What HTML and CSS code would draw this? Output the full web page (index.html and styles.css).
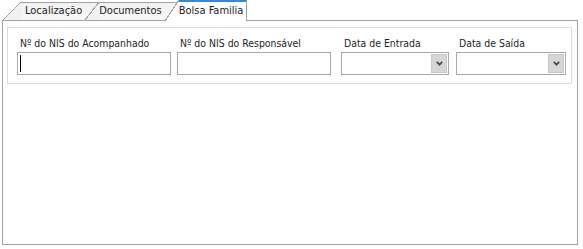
FILE: index.html
```html
<!DOCTYPE html>
<html lang="pt-BR">
<head>
    <meta charset="UTF-8">
    <title>Bolsa Familia</title>
    <link rel="stylesheet" href="styles.css">
</head>
<body>

    <div class="window">
        <div class="tabs">
            <div class="tab tab-first">Localização</div>
            <div class="tab">Documentos</div>
            <div class="tab tab-active">Bolsa Familia</div>
        </div>

        <div class="panel">
            <div class="group">
                <div class="field">
                    <label for="nisAcomp">Nº do NIS do Acompanhado</label>
                    <div class="input-wrap">
                        <input type="text" id="nisAcomp" class="text-input">
                        <span class="caret"></span>
                    </div>
                </div>
                <div class="field">
                    <label for="nisResp">Nº do NIS do Responsável</label>
                    <input type="text" id="nisResp" class="text-input">
                </div>
                <div class="field">
                    <label for="dataEntrada">Data de Entrada</label>
                    <div class="select select-entrada">
                        <select id="dataEntrada"></select>
                        <span class="select-btn">
                            <svg width="7" height="5" viewBox="0 0 7 5"><polyline points="0.8,0.8 3.5,3.6 6.2,0.8" fill="none" stroke="#4a4a4a" stroke-width="1.8"/></svg>
                        </span>
                    </div>
                </div>
                <div class="field">
                    <label for="dataSaida">Data de Saída</label>
                    <div class="select select-saida">
                        <select id="dataSaida"></select>
                        <span class="select-btn">
                            <svg width="7" height="5" viewBox="0 0 7 5"><polyline points="0.8,0.8 3.5,3.6 6.2,0.8" fill="none" stroke="#4a4a4a" stroke-width="1.8"/></svg>
                        </span>
                    </div>
                </div>
            </div>
        </div>
    </div>

</body>
</html>
```

FILE: styles.css
```css
*,
::after,
::before {
    margin: 0;
    padding: 0;
    box-sizing: border-box;
}

body {
    background-color: #fff;
    font-family: "DejaVu Sans Condensed", "DejaVu Sans", sans-serif;
    font-size: 11px;
    color: #1e1e1e;
}

/* tab strip */
.tabs {
    display: flex;
    align-items: flex-start;
    height: 20px;
    position: relative;
    z-index: 1;
}

.tab {
    --s: 14px;
    height: 18px;
    margin-top: 2px;
    margin-left: -14px;
    padding: 0 17px 0 14px;
    line-height: 18px;
    white-space: nowrap;
    color: #222;
    background:
        linear-gradient(#a2a2a2, #a2a2a2) var(--s) 0 / 100% 1px no-repeat,
        linear-gradient(to bottom right, transparent calc(50% - 0.6px), #a2a2a2 calc(50% - 0.6px), #a2a2a2 calc(50% + 0.6px), #f1f1f1 calc(50% + 0.6px)) 0 0 / var(--s) 100% no-repeat,
        linear-gradient(#f1f1f1, #f7f7f7) var(--s) 0 / 100% 100% no-repeat;
}

.tab-first {
    --s: 18px;
    margin-left: 3px;
    padding-left: 22px;
}

.tab-active {
    height: 21px;
    margin-top: 0;
    margin-bottom: -1px;
    padding: 2px 3px 0 14px;
    border-right: 1px solid #a2a2a2;
    background:
        linear-gradient(#3b86d6, #3b86d6) var(--s) 0 / 100% 2px no-repeat,
        linear-gradient(to bottom right, transparent calc(50% - 0.6px), #a2a2a2 calc(50% - 0.6px), #a2a2a2 calc(50% + 0.6px), #fff calc(50% + 0.6px)) 0 0 / var(--s) 100% no-repeat,
        linear-gradient(#fff, #fff) var(--s) 0 / 100% 100% no-repeat;
}

/* tab body */
.panel {
    margin-left: 2px;
    width: 576px;
    height: 225px;
    border: 1px solid #a2a2a2;
    padding: 6px 5px 0 4px;
}

.group {
    display: grid;
    grid-template-columns: 160px 164px 115px 110px;
    height: 57px;
    border: 1px solid #dcdcdc;
    padding: 9px 0 0 9px;
}

.field label {
    display: block;
    padding-left: 3px;
    font-size: 10.4px;
    line-height: 13px;
    margin-bottom: 2px;
    white-space: nowrap;
}

.input-wrap {
    position: relative;
    width: 154px;
}

.text-input {
    display: block;
    width: 154px;
    height: 23px;
    border: 1px solid #a9a9a9;
    padding: 0 3px;
    font: inherit;
    outline: none;
}

.caret {
    position: absolute;
    left: 3px;
    top: 3px;
    bottom: 3px;
    width: 1px;
    background-color: #000;
}

.select {
    display: flex;
    height: 23px;
    border: 1px solid #a9a9a9;
    background-color: #fff;
}

.select-entrada {
    width: 108px;
}

.select-saida {
    width: 110px;
}

.select select {
    flex: 1;
    min-width: 0;
    appearance: none;
    border: none;
    background: transparent;
    font: inherit;
    outline: none;
}

.select-btn {
    display: flex;
    align-items: center;
    justify-content: center;
    width: 16px;
    margin: 1px;
    background-color: #d6d6d6;
    border: 1px solid #c8c8c8;
}
```
